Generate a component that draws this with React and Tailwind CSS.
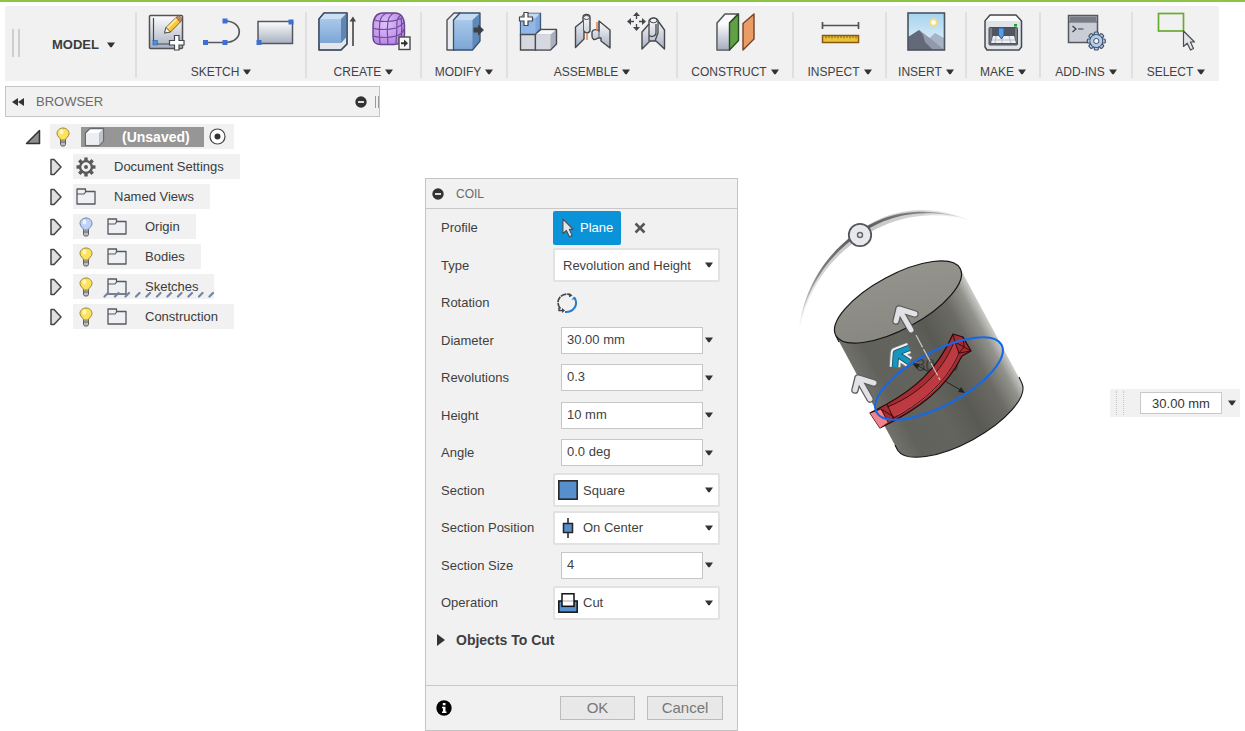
import React from "react";

const Caret = () => (
  <svg width="8" height="6" viewBox="0 0 8 6" className="shrink-0" aria-hidden="true">
    <path d="M0 0.500H8L4.700 5.300H3.300Z" fill="#333" />
  </svg>
);

const Icon = ({ children }) => (
  <svg width="38" height="40" viewBox="0 0 38 40" className="overflow-visible" aria-hidden="true">
    {children}
  </svg>
);

const Defs = () => (
  <svg width="0" height="0" className="absolute" aria-hidden="true">
    <defs>
      <linearGradient id="steel" x1="0" y1="0" x2="0" y2="1">
        <stop offset="0" stopColor="#fdfdfe" />
        <stop offset="1" stopColor="#a7afc0" />
      </linearGradient>
      <linearGradient id="blue" x1="0" y1="0" x2="0" y2="1">
        <stop offset="0" stopColor="#a9c8ea" />
        <stop offset="1" stopColor="#7ca6d6" />
      </linearGradient>
      <linearGradient id="sky" x1="0" y1="0" x2="0" y2="1">
        <stop offset="0" stopColor="#a5d3ee" />
        <stop offset="1" stopColor="#eaf5fb" />
      </linearGradient>
      <radialGradient id="violet" cx="0.4" cy="0.35" r="0.7">
        <stop offset="0" stopColor="#dfc0fb" />
        <stop offset="1" stopColor="#b384e4" />
      </radialGradient>
    </defs>
  </svg>
);

const SketchIcon = () => (
  <Icon>
    <rect x="1.500" y="3.500" width="33" height="33" rx="1" fill="url(#steel)" stroke="#505258" strokeWidth="1.500" />
    <path d="M5.500 6V32H26" fill="none" stroke="#45484f" strokeWidth="1.200" />
    <rect x="5" y="28.500" width="4.500" height="4.500" fill="#4b8fe0" stroke="#2361ad" strokeWidth="0.600" />
    <path d="M16.500 21L18 15.500L28 5.500L32.500 9.800L22.500 20Z" fill="#fac63c" stroke="#6d551f" strokeWidth="0.900" />
    <path d="M19.500 16L29 6.500" stroke="#ffec9c" strokeWidth="1.800" />
    <path d="M28 5.500L30.500 3.300L34.500 7L32.500 9.800Z" fill="#c6855e" stroke="#704b37" strokeWidth="0.700" />
    <path d="M16.500 21L18 15.500L22.500 20Z" fill="#fff6df" stroke="#4d4d4d" strokeWidth="0.900" />
    <path d="M26.500 23.500H31V28.500H36V33H31V38H26.500V33H21.500V28.500H26.500Z" fill="#fff" stroke="#45474b" strokeWidth="1.200" />
  </Icon>
);

const LineIcon = () => (
  <Icon>
    <path d="M3 30.500H23C42 30.500 42 9 23 9" fill="none" stroke="#55585c" strokeWidth="1.700" />
    <path d="M1 28H6V33H1ZM20.500 28H25.500V33H20.500ZM20.500 6.500H25.500V11.500H20.500Z" fill="#3c70d2" />
  </Icon>
);

const RectIcon = () => (
  <Icon>
    <rect x="2" y="9.500" width="34.500" height="22" fill="url(#steel)" stroke="#55585c" strokeWidth="1.500" />
    <path d="M0.500 28H5.500V33H0.500ZM32.500 7.500H37.500V12.500H32.500Z" fill="#3c70d2" />
  </Icon>
);

const ExtrudeIcon = () => (
  <Icon>
    <path d="M1 7L6 1H29V32L23 38H1Z" fill="#e5e6ea" stroke="#4a5058" strokeWidth="1.500" strokeLinejoin="round" />
    <path d="M1.500 7L6 1.500H28.500V25L23 31H1.500Z" fill="#85aeda" />
    <path d="M2 7L6.500 1.700H28L23 7Z" fill="#cbe0f4" />
    <path d="M23 7L28.500 1.700V25L23 31Z" fill="#6186b3" />
    <rect x="2" y="7" width="21" height="24" fill="url(#blue)" />
    <path d="M1 7L6 1H29V32L23 38H1Z" fill="none" stroke="#394f6a" strokeWidth="1.200" strokeLinejoin="round" />
    <path d="M35 34V8" stroke="#55575b" strokeWidth="1.800" />
    <path d="M31.500 9.500L35 4.500L38 9.500Z" fill="#45474b" />
  </Icon>
);

const FormIcon = () => (
  <Icon>
    <path d="M1 15C1 7 4 1 11 1H23C29 1 32.500 6 32.500 13V23C32 29 29 32.500 22 32.500H9C3 32.500 1 30 1 25Z" fill="url(#violet)" stroke="#66438b" strokeWidth="1.400" />
    <path d="M1 16C5 18 17 18 24 16C28 14 31 12 32.500 10M1 24C7 26 17 26 24 24C28 23 31 20 32 17M3 8C8 10 19 10 25 8C28 7 30 6 31 5M8 32C7 20 7 15 8 9C9 4 12 2 15 1M16 32C15 20 15 15 16 9C17 4 20 2 22 1M24 31.500C25 20 25 15 25 8C26 5 28 4 29 3M29 29C30 19 30 11 29 6" fill="none" stroke="#714b99" strokeWidth="1.200" />
    <rect x="27" y="25" width="11" height="12.500" fill="#f7f7f7" stroke="#4a4a4a" strokeWidth="1.400" />
    <path d="M29 30.300H32V27.500L36 31.200L32 35V32.200H29Z" fill="#333" />
  </Icon>
);

const PressPullIcon = () => (
  <Icon>
    <path d="M2 8L9 1H15L9 8V38H2Z" fill="#eaebee" stroke="#4e5258" strokeWidth="1.400" strokeLinejoin="round" />
    <path d="M8.500 8L15 1H35V29L27.500 38H8.500Z" fill="#5f89b9" />
    <path d="M8.500 8L15 1H35L27.500 8Z" fill="#c4dbf1" />
    <rect x="8.500" y="8" width="19" height="30" fill="url(#blue)" />
    <path d="M8.500 8L15 1H35V29L27.500 38H8.500Z" fill="none" stroke="#37516f" strokeWidth="1.300" strokeLinejoin="round" />
    <path d="M28.500 15.500H33V12.500L39 18L33 23.500V20.500H28.500Z" fill="#3d4044" />
  </Icon>
);

const ComponentIcon = () => (
  <Icon>
    <path d="M1.500 6L6 1.500H21.500V17L16.500 22.500H1.500Z" fill="#7ea8db" stroke="#3c5878" strokeWidth="1.300" />
    <path d="M1.500 6L6 1.500H21L16.500 6Z" fill="#c3daf4" />
    <rect x="2" y="6" width="14.500" height="16" fill="#90b7e7" />
    <path d="M1.500 22.500H16.500V38H1.500Z" fill="#d5d8df" stroke="#484b50" strokeWidth="1.400" />
    <path d="M16.500 22.500L22 17.500H37.500V32L31.500 38H16.500Z" fill="#aab0bd" stroke="#484b50" strokeWidth="1.400" strokeLinejoin="round" />
    <path d="M17.200 22.200L22.300 18.200H36.500L31.500 22.500Z" fill="#f8f8fa" />
    <rect x="17.200" y="22.500" width="14.300" height="14.800" fill="#d5d8df" />
    <path d="M5 0.500H9V5H13.500V9H9V13.500H5V9H0.500V5H5Z" fill="#fff" stroke="#44474c" strokeWidth="1.200" />
  </Icon>
);

const JointIcon = () => (
  <Icon>
    <path d="M2.500 15L10 9V5.500C10 1.500 17 1.500 17 5.500V19C15 22 12 21 11 19V27L2.500 35.500Z" fill="url(#steel)" stroke="#44474b" strokeWidth="1.400" strokeLinejoin="round" />
    <ellipse cx="13.500" cy="5.500" rx="3" ry="2" fill="#eceef2" stroke="#44474b" />
    <path d="M10.500 8V19" stroke="#5b5e63" />
    <path d="M26 9L37 18V36L28 29V26H25C21 29 19 27 19 24V20C20 17 24 17 26 19Z" fill="url(#steel)" stroke="#44474b" strokeWidth="1.400" strokeLinejoin="round" />
    <path d="M26 10V26" stroke="#5b5e63" />
    <path d="M14 21V28M24 10V18" stroke="#ef8134" strokeWidth="1.500" />
  </Icon>
);

const AsBuiltJointIcon = () => (
  <Icon>
    <path d="M15 20L22 12V9C23 5 30 5 31 9L37.500 18V37L29 29H23L15 37Z" fill="url(#steel)" stroke="#44474b" strokeWidth="1.400" strokeLinejoin="round" />
    <path d="M22 12V23C24 26 29 24 29 21V12M31 10V21L28 29M22 23V29" fill="none" stroke="#44474b" strokeWidth="1.300" />
    <ellipse cx="26.500" cy="8.500" rx="3.500" ry="2.300" fill="#edf0f3" stroke="#44474b" />
    <path d="M9.500 3V7M9.500 12V16M3 9.500H7M12 9.500H16" stroke="#44474b" strokeWidth="1.300" />
    <path d="M9.500 0L13 4H6ZM9.500 19L13 15H6ZM0 9.500L4 6V13ZM19 9.500L15 6V13Z" fill="#44474b" />
  </Icon>
);

const PlaneIcon = () => (
  <Icon>
    <path d="M1 11L9 2H22L13.500 11V38H1Z" fill="#fafafa" stroke="#515459" strokeWidth="1.500" strokeLinejoin="round" />
    <rect x="2" y="11" width="11" height="26" fill="url(#steel)" />
    <path d="M13.500 11L22.500 2V28.500L13.500 38Z" fill="#60a145" stroke="#274d22" strokeWidth="1.400" strokeLinejoin="round" />
    <path d="M27 11.500L38 2V27L27 38Z" fill="#ea9c66" stroke="#774129" strokeWidth="1.400" strokeLinejoin="round" />
  </Icon>
);

const MeasureIcon = () => (
  <Icon>
    <path d="M1.500 13.500H37.500M1.500 10V17M37.500 10V17" stroke="#505256" strokeWidth="1.700" />
    <rect x="1.500" y="23.500" width="36" height="7" fill="#ecc332" stroke="#875817" strokeWidth="1.500" />
    <path d="M5 24V26.500M8 24V26M11 24V26.500M14 24V26M17 24V26.500M20 24V26M23 24V26.500M26 24V26M29 24V26.500M32 24V26M35 24V26.500" stroke="#805c1a" />
  </Icon>
);

const PictureIcon = () => (
  <Icon>
    <rect x="1" y="1" width="36.500" height="37" fill="url(#sky)" />
    <circle cx="26.500" cy="10.500" r="3.300" fill="#fff" stroke="#f3dc84" strokeWidth="2" />
    <path d="M17 31L28 21L37 26V37H17Z" fill="#a6b4c5" />
    <path d="M1 25L12 18L24 28L37 38H1Z" fill="#64697a" />
    <path d="M12 18L16 23L18 30L26 38H37L24 27Z" fill="#9299ab" />
    <rect x="1" y="1" width="36.500" height="37" fill="none" stroke="#4a5360" strokeWidth="1.600" />
  </Icon>
);

const PrinterIcon = () => (
  <Icon>
    <path d="M1 9L6 3H32L37.500 9V35L35 38H3L1 35Z" fill="#e0e3e8" stroke="#454950" strokeWidth="1.500" strokeLinejoin="round" />
    <path d="M2 9L6.500 4H31.500L36 9Z" fill="#fbfbfc" />
    <rect x="5" y="15.500" width="28.500" height="17.500" rx="1" fill="#777c85" stroke="#4a4f56" />
    <path d="M8 16H31V25L33 32H6L8 25Z" fill="#50555e" />
    <path d="M9 24H30L32 31H7Z" fill="#eef1f4" />
    <path d="M12 24L11 31M18 24V31M25 24L27 31M8 28H31" stroke="#b6bdc6" />
    <path d="M14.500 16H20V23L17.500 27L14.500 23Z" fill="#5b9ce0" stroke="#315c91" />
    <rect x="30" y="12" width="3" height="2.500" fill="#1aa32b" />
  </Icon>
);

const teeth = [0, 45, 90, 135, 180, 225, 270, 315];

const AddInsIcon = () => (
  <Icon>
    <rect x="1.500" y="3.500" width="29" height="27" fill="#c9cdd6" stroke="#55585d" strokeWidth="1.500" />
    <rect x="2.500" y="4.500" width="27" height="5" fill="#767c86" />
    <path d="M1.500 10H30.500" stroke="#55585d" />
    <path d="M5.500 14L9 17L5.500 20M11 17H16.500" fill="none" stroke="#3c3e43" strokeWidth="1.200" />
    <g fill="#b3cceb" stroke="#43536a" strokeWidth="1.200">
      {teeth.map((a) => (
        <rect key={a} x="27.300" y="20" width="4" height="6" rx="1" transform={`rotate(${a} 29.300 29)`} />
      ))}
      <circle cx="29.300" cy="29" r="6.300" />
    </g>
    <circle cx="29.300" cy="29" r="5.900" fill="#b3cceb" />
    <circle cx="29.300" cy="29" r="2.600" fill="#f7f7f7" stroke="#43536a" />
  </Icon>
);

const Pointer = () => (
  <path d="M0 0V15.500L3.700 12.200L7 19L10 17.500L6.900 11H11Z" fill="#e3e5e9" stroke="#4a4c50" strokeWidth="1.200" strokeLinejoin="round" />
);

const SelectIcon = () => (
  <Icon>
    <rect x="1.500" y="1.500" width="25" height="17.500" fill="none" stroke="#69ab2f" strokeWidth="1.700" />
    <g transform="translate(26.500 19)">
      <Pointer />
    </g>
  </Icon>
);

const groups = [
  { label: "SKETCH", grow: "grow-[168]", icons: [["Create Sketch", SketchIcon], ["Line", LineIcon], ["Rectangle", RectIcon]] },
  { label: "CREATE", grow: "grow-[113]", icons: [["Extrude", ExtrudeIcon], ["Create Form", FormIcon]] },
  { label: "MODIFY", grow: "grow-[84]", icons: [["Press Pull", PressPullIcon]] },
  { label: "ASSEMBLE", grow: "grow-[168]", icons: [["New Component", ComponentIcon], ["Joint", JointIcon], ["As-built Joint", AsBuiltJointIcon]] },
  { label: "CONSTRUCT", grow: "grow-[114]", icons: [["Offset Plane", PlaneIcon]] },
  { label: "INSPECT", grow: "grow-[91]", icons: [["Measure", MeasureIcon]] },
  { label: "INSERT", grow: "grow-[78]", icons: [["Attached Canvas", PictureIcon]] },
  { label: "MAKE", grow: "grow-[72]", icons: [["3D Print", PrinterIcon]] },
  { label: "ADD-INS", grow: "grow-[90]", icons: [["Scripts and Add-Ins", AddInsIcon]] },
  { label: "SELECT", grow: "grow-[86]", icons: [["Select", SelectIcon]] },
];

function Toolbar() {
  return (
    <header className="mt-1 mr-[26px] ml-[5px] flex h-[75px] bg-[#f1f1f1] pt-1.5 pb-[3px]">
      <div className="flex min-w-0 grow-[123] basis-0 items-center pl-[7px]">
        <span className="-mt-1 h-7 w-2 border-x-2 border-[#cfcfcf]" />
        <button className="ml-8 flex items-center gap-2 text-[13px] font-bold text-[#3c3c3c]">
          MODEL <Caret />
        </button>
      </div>
      {groups.map(({ label, grow, icons }) => (
        <div key={label} className={`flex min-w-0 basis-0 flex-col items-center justify-between border-l-2 border-[#e0e0e0] ${grow}`}>
          <div className="flex gap-4">
            {icons.map(([name, Glyph]) => (
              <button key={name} aria-label={name}>
                <Glyph />
              </button>
            ))}
          </div>
          <button className="flex items-center gap-1 text-xs leading-3 whitespace-nowrap text-[#3f4247]">
            {label} <Caret />
          </button>
        </div>
      ))}
    </header>
  );
}

const Minus = () => (
  <svg width="12" height="12" viewBox="0 0 12 12" aria-hidden="true">
    <circle cx="6" cy="6" r="5.700" fill="#333" />
    <path d="M3 6H9" stroke="#f1f1f1" strokeWidth="1.800" />
  </svg>
);

const Bulb = ({ off }) => (
  <svg width="14" height="20" viewBox="0 0 14 20" aria-hidden="true">
    <path d="M4.500 11H9.500V17.500L8.500 19H5.500L4.500 17.500Z" fill="#babbbd" stroke="#5d5d60" />
    <path d="M5 15H9.500" stroke="#5d5d60" />
    <path d="M7 1C3.500 1 1 3.500 1 6.500C1 10 4.500 10.500 4.500 13H9.500C9.500 10.500 13 10 13 6.500C13 3.500 10.500 1 7 1Z" fill={off ? "#bcd3fa" : "#fbe45c"} stroke={off ? "#7181a4" : "#9b8231"} />
    <ellipse cx="5.500" cy="5" rx="2" ry="2.500" fill="#fff" opacity="0.700" />
  </svg>
);

const Folder = () => (
  <svg width="20" height="17" viewBox="0 0 20 17" aria-hidden="true">
    <path d="M1 1H9.500V3.500H19V16H1Z" fill="#eef0f3" stroke="#55585e" strokeWidth="1.300" strokeLinejoin="round" />
    <path d="M1 6H8L10 3.500" fill="none" stroke="#55585e" strokeWidth="1.200" />
  </svg>
);

const Gear = () => (
  <svg width="20" height="20" viewBox="0 0 20 20" aria-hidden="true">
    {teeth.map((a) => (
      <rect key={a} x="8.300" y="0.500" width="3.400" height="4" fill="#595959" transform={`rotate(${a} 10 10)`} />
    ))}
    <circle cx="10" cy="10" r="5.900" fill="none" stroke="#595959" strokeWidth="2.400" />
    <circle cx="10" cy="10" r="2" fill="#595959" />
  </svg>
);

const Expander = () => (
  <svg width="12" height="18" viewBox="0 0 12 18" aria-hidden="true">
    <path d="M1 1.500H4L11 9L4 16.500H1Z" fill="#e0e0e0" stroke="#444" strokeWidth="1.500" strokeLinejoin="round" />
  </svg>
);

const nodes = [
  { name: "Document Settings", icon: "gear" },
  { name: "Named Views", icon: "folder" },
  { name: "Origin", icon: "folder", bulb: "off" },
  { name: "Bodies", icon: "folder", bulb: "on" },
  { name: "Sketches", icon: "folder", bulb: "on", hatched: true },
  { name: "Construction", icon: "folder", bulb: "on" },
];

function Browser() {
  return (
    <aside className="w-[375px] shrink-0 pt-[5px]">
      <div className="flex h-[31px] items-center border border-[#c4c4c4] bg-[#f1f1f1] pl-1.5 text-[13px] text-[#6a6a6a]">
        <button aria-label="Collapse browser">
          <svg width="12" height="8" viewBox="0 0 12 8" aria-hidden="true">
            <path d="M6 0V8L0 4ZM12 0V8L6 4Z" fill="#333" />
          </svg>
        </button>
        <h2 className="ml-3">BROWSER</h2>
        <button className="ml-auto" aria-label="Minimize browser">
          <Minus />
        </button>
        <span className="ml-2 h-3 w-1 border-x border-[#999]" />
      </div>
      <ul className="mt-[7px] flex flex-col gap-[5px] text-[13px] text-[#3b3b3b]">
        <li className="flex h-[25px] items-center pl-5">
          <button className="w-[25px]" aria-label="Collapse (Unsaved)">
            <svg width="16" height="16" viewBox="0 0 16 16" aria-hidden="true">
              <path d="M1.500 14.500L14.500 1.500V14.500Z" fill="#8d8d8d" stroke="#333" strokeWidth="1.500" strokeLinejoin="round" />
            </svg>
          </button>
          <div className="flex h-full items-center bg-[#f1f1f1] px-1.5">
            <Bulb />
            <div className="ml-[11px] flex h-[20px] items-center bg-[#969696] pr-3.5 pl-[3px] text-sm font-bold text-white">
              <svg width="21" height="20" viewBox="0 0 21 20" aria-hidden="true">
                <path d="M1.500 6L6 1.500H19.500V14L15 18.500H1.500Z" fill="#fff" stroke="#666a70" strokeWidth="1.300" strokeLinejoin="round" />
                <path d="M15 6L19 2V14L15 18Z" fill="#bfc2c8" />
                <rect x="2.200" y="6" width="12.800" height="11.800" fill="#eceef1" />
              </svg>
              <span className="ml-[17px]">(Unsaved)</span>
            </div>
            <svg width="17" height="17" viewBox="0 0 17 17" className="mr-0.5 ml-[5px]" aria-hidden="true">
              <circle cx="8.500" cy="8.500" r="7.500" fill="#fff" stroke="#444" strokeWidth="1.200" />
              <circle cx="8.500" cy="8.500" r="3" fill="#333" />
            </svg>
          </div>
        </li>
        {nodes.map(({ name, icon, bulb, hatched }) => (
          <li key={name} className="flex h-[25px] items-center pl-[45px]">
            <button className="w-[23px]" aria-label={`Expand ${name}`}>
              <Expander />
            </button>
            <div className="relative flex h-full items-center bg-[#f1f1f1] pr-4">
              {bulb && (
                <span className="ml-1.5 w-7 pr-3.5">
                  <Bulb off={bulb === "off"} />
                </span>
              )}
              <span className={bulb ? "w-[38px]" : "ml-[3px] w-[38px]"}>{icon === "gear" ? <Gear /> : <Folder />}</span>
              <span>{name}</span>
              {hatched && (
                <svg width="112" height="7" viewBox="0 0 112 7" className="absolute bottom-px left-[30px]" aria-hidden="true">
                  {Array.from({ length: 11 }, (_, i) => (
                    <path key={i} d="M1.500 5.500L5 2" transform={`translate(${i * 10.500} 0)`} stroke="#7184a8" strokeWidth="2.200" strokeLinecap="round" />
                  ))}
                </svg>
              )}
            </div>
          </li>
        ))}
      </ul>
    </aside>
  );
}

const RotationIcon = () => (
  <svg width="22" height="22" viewBox="0 0 22 22" aria-hidden="true">
    <path d="M4.500 16.500C-1 11 3 1.500 12 2.200L15 3.200" fill="none" stroke="#40444c" strokeWidth="1.700" strokeDasharray="6 0.800" />
    <path d="M18.500 6C23 13 17 20.500 9 20" fill="none" stroke="#287bcd" strokeWidth="2" />
    <path d="M13.500 1L16.500 3.800L13 5.200Z" fill="#40444c" />
    <path d="M15.500 8L18 4.500L20.500 6.500Z" fill="#287bcd" />
    <path d="M3 15.500V18.500H7" fill="none" stroke="#40444c" strokeWidth="1.500" />
    <path d="M6 16L9 18.500L6 21Z" fill="#40444c" />
  </svg>
);

const SquareIcon = () => (
  <svg width="20" height="20" viewBox="0 0 20 20" aria-hidden="true">
    <rect x="0.800" y="0.800" width="18.400" height="18.400" fill="#568fcb" stroke="#222" strokeWidth="1.500" />
  </svg>
);

const CenterIcon = () => (
  <svg width="20" height="20" viewBox="0 0 20 20" aria-hidden="true">
    <path d="M10 0V20" stroke="#555" strokeWidth="2" />
    <rect x="5.500" y="5.500" width="9" height="9" fill="#568fcb" stroke="#222" strokeWidth="1.500" />
  </svg>
);

const CutIcon = () => (
  <svg width="20" height="20" viewBox="0 0 20 20" aria-hidden="true">
    <rect x="0.800" y="8" width="18.400" height="11.200" fill="#568fcb" stroke="#111" strokeWidth="1.500" />
    <rect x="4" y="0.800" width="12" height="12.500" fill="#fff" stroke="#111" strokeWidth="1.500" />
    <path d="M5 8H15" stroke="#aaa" />
  </svg>
);

const fields = [
  { label: "Type", value: "Revolution and Height", kind: "select" },
  { label: "Rotation", kind: "rotation" },
  { label: "Diameter", value: "30.00 mm", kind: "input" },
  { label: "Revolutions", value: "0.3", kind: "input" },
  { label: "Height", value: "10 mm", kind: "input" },
  { label: "Angle", value: "0.0 deg", kind: "input" },
  { label: "Section", value: "Square", kind: "select", icon: <SquareIcon /> },
  { label: "Section Position", value: "On Center", kind: "select", icon: <CenterIcon /> },
  { label: "Section Size", value: "4", kind: "input" },
  { label: "Operation", value: "Cut", kind: "select", icon: <CutIcon /> },
];

function Field({ label, value, kind, icon }) {
  const id = label.toLowerCase().replaceAll(" ", "-");
  return (
    <div className="flex items-center">
      <label htmlFor={id} className="w-28 shrink-0">{label}</label>
      {kind === "rotation" && (
        <button id={id} type="button" className="ml-[3px]">
          <RotationIcon />
        </button>
      )}
      {kind === "input" && (
        <div className="ml-2 flex items-center gap-0.5">
          <input id={id} defaultValue={value} className="h-[27px] w-[142px] border border-[#c6c6c6] bg-white px-[5px] pb-0.5 outline-none" />
          <button type="button" aria-label={`${label} options`}>
            <Caret />
          </button>
        </div>
      )}
      {kind === "select" && (
        <div className="relative flex w-[167px] items-center">
          <select
            id={id}
            defaultValue={value}
            className={`h-[34px] w-full appearance-none rounded-xs border-2 border-[#e2e2e2] bg-white outline-none ${icon ? "pl-7" : "pl-2"}`}
          >
            <option>{value}</option>
          </select>
          <span className="pointer-events-none absolute left-[5px]">{icon}</span>
          <span className="pointer-events-none absolute right-[7px]">
            <Caret />
          </span>
        </div>
      )}
    </div>
  );
}

function CoilDialog() {
  return (
    <form className="mt-[97px] ml-[45px] w-[313px] shrink-0 self-start border border-[#c4c4c4] bg-[#f1f1f1] text-[13px] text-[#3f3f3f]" onSubmit={(e) => e.preventDefault()}>
      <div className="flex h-[30px] items-center gap-3 border-b border-[#c8c8c8] pl-1.5">
        <button type="button" aria-label="Minimize">
          <Minus />
        </button>
        <h2 className="text-xs text-[#6a6a6a]">COIL</h2>
      </div>
      <div className="grid h-[450px] grid-rows-12 items-center pl-[15px]">
        <div className="flex items-center">
          <span className="w-28 shrink-0">Profile</span>
          <button type="button" className="flex h-[34px] w-[68px] items-center gap-1.5 rounded-xs bg-[#0a93d8] pl-[9px] text-white">
            <svg width="12" height="20" viewBox="-1 -1 13 21" aria-hidden="true">
              <Pointer />
            </svg>
            Plane
          </button>
          <button type="button" className="ml-[13px]" aria-label="Clear profile">
            <svg width="12" height="12" viewBox="0 0 12 12" aria-hidden="true">
              <path d="M1.500 1.500L10.500 10.500M10.500 1.500L1.500 10.500" stroke="#555" strokeWidth="2.500" />
            </svg>
          </button>
        </div>
        {fields.map((f) => (
          <Field key={f.label} {...f} />
        ))}
        <button type="button" className="-ml-1 flex items-center gap-[11px] text-sm font-bold">
          <svg width="8" height="12" viewBox="0 0 8 12" aria-hidden="true">
            <path d="M0 0L8 6L0 12Z" fill="#333" />
          </svg>
          Objects To Cut
        </button>
      </div>
      <div className="mt-[26px] flex h-[45px] items-center border-t border-[#c8c8c8] pr-3.5 pl-2.5 text-[15px] text-[#777]">
        <button type="button" aria-label="Information">
          <svg width="16" height="16" viewBox="0 0 16 16" aria-hidden="true">
            <circle cx="8" cy="8" r="7.700" fill="#050505" />
            <path d="M6.800 3H9.500V5.300H6.800ZM6 6.800H9.500V11.500H10.500V13H6V11.500H7V8.300H6Z" fill="#fff" />
          </svg>
        </button>
        <button type="submit" className="ml-auto h-6 w-[75px] border border-[#bcbcbc] bg-[#e8e8e8]">OK</button>
        <button type="button" className="ml-3 h-6 w-[76px] border border-[#bcbcbc] bg-[#e8e8e8]">Cancel</button>
      </div>
    </form>
  );
}

const BLUE_ARROW = "M119 148L106 153L105 167M107 154L119 162";

const Model = () => (
  <svg width="250" height="270" viewBox="0 0 250 270" className="mt-[119px] ml-[52px] shrink-0" role="img" aria-label="Coil preview">
    <defs>
      <linearGradient id="side" gradientUnits="userSpaceOnUse" x1="65" y1="205" x2="207" y2="128">
        <stop offset="0" stopColor="#83847f" />
        <stop offset="0.080" stopColor="#73746e" />
        <stop offset="0.220" stopColor="#62625d" />
        <stop offset="0.450" stopColor="#64645e" />
        <stop offset="0.620" stopColor="#5a5a54" />
        <stop offset="0.800" stopColor="#6b6b64" />
        <stop offset="0.910" stopColor="#92928c" />
        <stop offset="1" stopColor="#e4e4e1" />
      </linearGradient>
      <linearGradient id="lid" x1="0" y1="1" x2="1" y2="0">
        <stop offset="0" stopColor="#86857f" />
        <stop offset="1" stopColor="#96958e" />
      </linearGradient>
      <linearGradient id="arc" gradientUnits="userSpaceOnUse" x1="8" y1="130" x2="182" y2="20">
        <stop offset="0" stopColor="#777" stopOpacity="0" />
        <stop offset="0.250" stopColor="#777" stopOpacity="0.900" />
        <stop offset="0.500" stopColor="#55565b" />
        <stop offset="0.800" stopColor="#777" stopOpacity="0.900" />
        <stop offset="1" stopColor="#777" stopOpacity="0" />
      </linearGradient>
    </defs>
    <path d="M9 132C15 73 54 34 92 18C119 7 151 7 182 21C151 12 121 14 94 25.500C59 40 20 73 9 132Z" fill="url(#arc)" opacity="0.350" />
    <path d="M9 130C15 73 54 34 92 19C119 9 151 9 182 21C151 10 119 11 93 21.500C56 37 18 73 9 130Z" fill="url(#arc)" />
    <circle cx="70" cy="35" r="11.200" fill="#e8e9ed" stroke="#55575c" strokeWidth="1.800" />
    <circle cx="70" cy="35" r="2.500" fill="none" stroke="#66686d" strokeWidth="1.500" />
    <path d="M45.800 135.500L107.800 250.500A70.600 27 -28.300 0 0 232 183.500L170.200 68.500Z" fill="url(#side)" />
    <path d="M107.800 250.500A70.600 27 -28.300 0 0 232 183.500M45.800 135.500L49 142M105 245L107.800 250.500M229 177L232 183.500" fill="none" stroke="#161616" strokeWidth="1.100" />
    <ellipse cx="108" cy="102" rx="70.600" ry="27" transform="rotate(-28.300 108 102)" fill="url(#lid)" stroke="#161616" strokeWidth="1.200" />
    <text x="126" y="171" fontSize="17" fontFamily="Liberation Sans, sans-serif" fill="#292a29" opacity="0.600">30.00</text>
    <path d="M125 164L174 192" stroke="#242424" />
    <path d="M122 163L130 164L127 169ZM175 193L168 192L171 187Z" fill="#222" />
    <path d="M163 134L173 137L181 151L172 156C156 188 131 208 90 228L80 213L97 204C122 190 147 171 163 134Z" fill="#a52c31" stroke="#260a0c" strokeWidth="1.200" strokeLinejoin="round" />
    <path d="M164 141C151 173 126 195 98 207L104 217C133 202 155 183 168 152Z" fill="#bd3a40" />
    <path d="M168 154C155 184 134 202 108 215" fill="none" stroke="#dc6a70" strokeWidth="1.500" opacity="0.700" />
    <path d="M80 213L91 209L98 222L90 228Z" fill="#f2838b" />
    <path d="M163 134L165 142L174 147L173 137M165 142L169 153L181 151L174 147L169 153M164 142C152 173 126 196 97 207M169 153C154 186 130 204 100 220M97 204L104 220M91 209L98 222M80 213L91 209L104 217" fill="none" stroke="#2a0b0d" strokeWidth="0.900" />
    <ellipse cx="149" cy="178.500" rx="71" ry="27" transform="rotate(-28.300 149 178.500)" fill="none" stroke="#1768e5" strokeWidth="2.100" />
    <path d="M126 135L150 180" stroke="#c6c6c6" strokeWidth="1.200" strokeDasharray="14 2" />
    {[[0, 0], [-41, 69]].map(([x, y]) => (
      <g key={x} transform={`translate(${x} ${y})`} fill="none" strokeLinejoin="round" strokeLinecap="round">
        <path d="M106 121L109 109L125 114M109 109L121 130" stroke="#5a5b5e" strokeWidth="7.500" />
        <path d="M106 121L109 109L125 114M109 109L121 130" stroke="#e2e2e5" strokeWidth="5" />
      </g>
    ))}
    <g fill="none" strokeLinejoin="round">
      <path d={BLUE_ARROW} stroke="#77797b" strokeWidth="12.500" />
      <path d={BLUE_ARROW} stroke="#f2f2f2" strokeWidth="10.500" />
      <path d={BLUE_ARROW} stroke="#164b60" strokeWidth="6.500" />
      <path d={BLUE_ARROW} stroke="#1596be" strokeWidth="5" />
    </g>
  </svg>
);

export default function App() {
  return (
    <div className="min-h-screen border-t-2 border-[#8ac63f] bg-white font-['Liberation_Sans',Arial,sans-serif]">
      <Defs />
      <Toolbar />
      <main className="flex items-start px-[5px]">
        <Browser />
        <CoilDialog />
        <Model />
        <div className="mt-[308px] ml-auto flex h-7 w-[130px] shrink-0 items-center bg-[#f1f1f1] pr-1 pl-1.5">
          <span className="h-6 w-2 border-x border-dotted border-[#c8c8c8]" />
          <input aria-label="Diameter value" defaultValue="30.00 mm" className="mr-1.5 ml-auto h-[22px] w-[82px] border border-[#c9c9c9] bg-white text-center text-[13px] text-[#333] outline-none" />
          <button aria-label="Value options">
            <Caret />
          </button>
        </div>
      </main>
    </div>
  );
}
